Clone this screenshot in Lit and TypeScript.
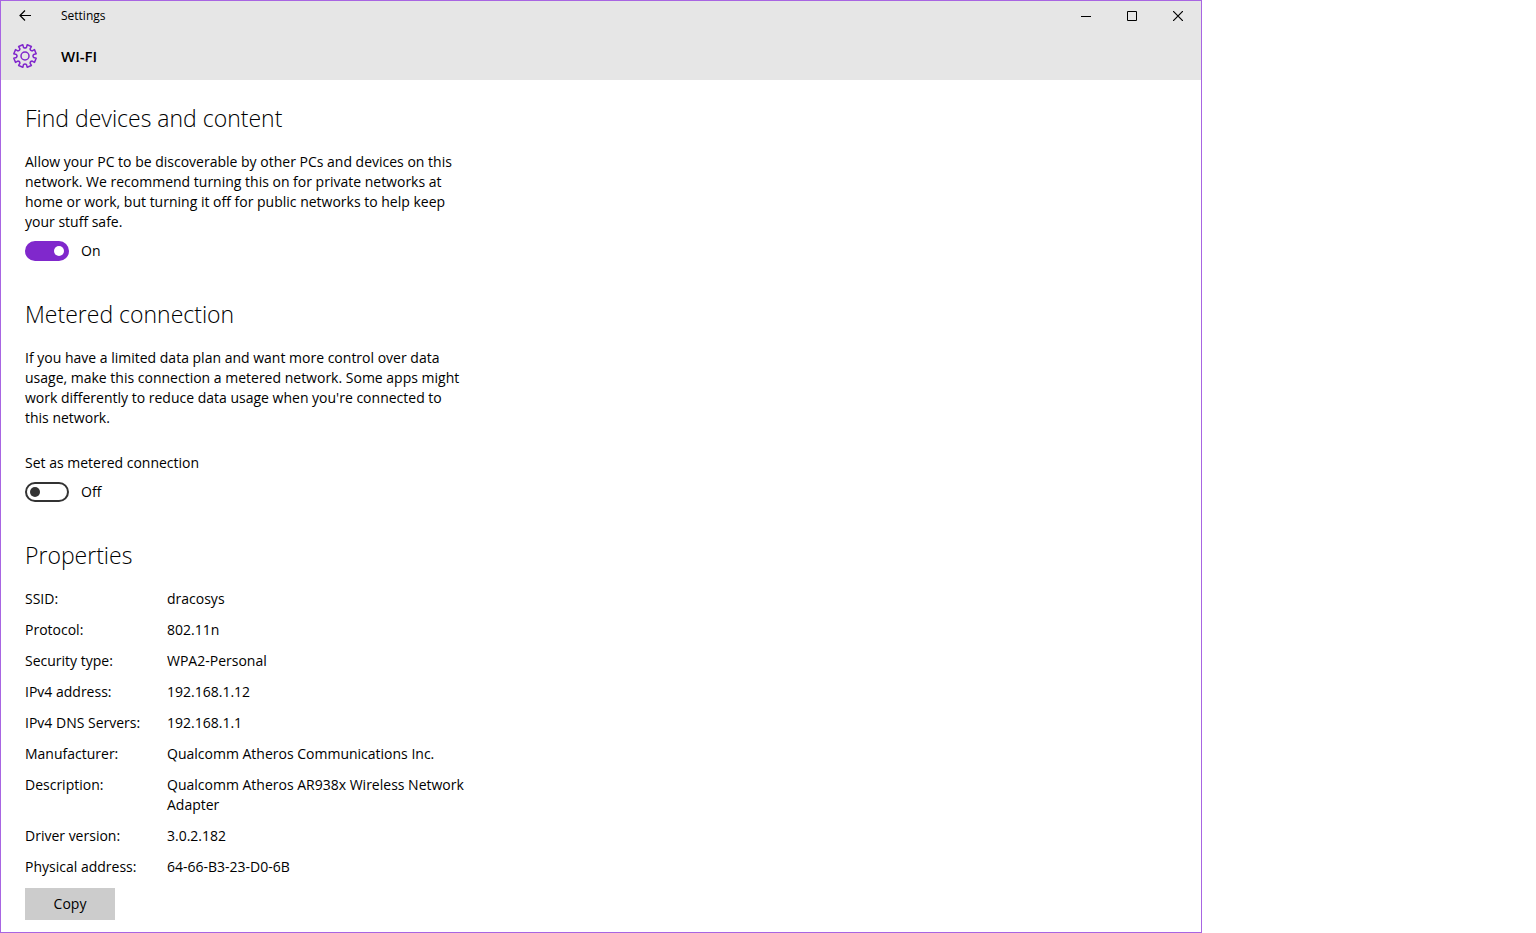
import { LitElement, html, css } from "lit";
import { customElement, property, state } from "lit/decorators.js";

/* Outline of a cog wheel: eight flat teeth joined by rounded valleys. */
function cogPath(c: number, outer: number, inner: number, teeth = 8): string {
  const step = (Math.PI * 2) / teeth;
  const at = (r: number, a: number) => `${(c + r * Math.sin(a)).toFixed(2)} ${(c - r * Math.cos(a)).toFixed(2)}`;
  let d = "";
  for (let i = 0; i < teeth; i++) {
    const a = (i + 0.5) * step;
    d += `${i ? "L" : "M"}${at(inner, a - 0.22)}L${at(outer, a - 0.2)}L${at(outer, a + 0.2)}L${at(inner, a + 0.22)}`;
    d += `Q${at(inner - 1.5, a + step / 2)} ${at(inner, a + step - 0.22)}`;
  }
  return d + "Z";
}

@customElement("toggle-switch")
export class ToggleSwitch extends LitElement {
  @property({ type: Boolean }) checked = false;
  @property() name = "";

  static styles = css`
    :host {
      display: block;
    }
    .switch {
      display: flex;
      align-items: center;
      gap: 12px;
      width: max-content;
      height: 20px;
    }
    .track {
      appearance: none;
      box-sizing: border-box;
      display: flex;
      align-items: center;
      width: 44px;
      height: 20px;
      margin: 0;
      padding: 0 3px;
      border: 2px solid #333;
      border-radius: 10px;
      background: #fff;
    }
    .track::before {
      content: "";
      width: 10px;
      height: 10px;
      border-radius: 50%;
      background: #333;
    }
    .track:checked {
      justify-content: flex-end;
      border-color: #8028cc;
      background: #8028cc;
    }
    .track:checked::before {
      background: #fff;
    }
  `;

  render() {
    return html`<label class="switch">
      <input
        class="track"
        type="checkbox"
        role="switch"
        aria-label=${this.name}
        .checked=${this.checked}
        @change=${(e: Event) => (this.checked = (e.target as HTMLInputElement).checked)}
      />
      <span>${this.checked ? "On" : "Off"}</span>
    </label>`;
  }
}

@customElement("app-root")
export class AppRoot extends LitElement {
  @state() private properties: [string, string][] = [
    ["SSID:", "dracosys"],
    ["Protocol:", "802.11n"],
    ["Security type:", "WPA2-Personal"],
    ["IPv4 address:", "192.168.1.12"],
    ["IPv4 DNS Servers:", "192.168.1.1"],
    ["Manufacturer:", "Qualcomm Atheros Communications Inc."],
    ["Description:", "Qualcomm Atheros AR938x Wireless Network Adapter"],
    ["Driver version:", "3.0.2.182"],
    ["Physical address:", "64-66-B3-23-D0-6B"],
  ];

  static styles = css`
    :host {
      display: block;
      min-height: 100vh;
      background: #fff;
      color: #000;
      font: 400 14px/20px "Segoe UI", "Open Sans", "Noto Sans", sans-serif;
    }
    .window {
      box-sizing: border-box;
      width: 100%;
      max-width: 1202px;
      min-height: 100vh;
      border: 1px solid #a865e2;
    }
    .top {
      background: #e6e6e6;
    }
    .titlebar {
      display: flex;
      align-items: center;
      height: 30px;
    }
    .caption {
      flex: 1;
      padding-left: 12px;
      font-size: 12px;
    }
    .bar-button {
      display: flex;
      align-items: center;
      justify-content: center;
      width: 46px;
      height: 30px;
      padding: 0;
      border: 0;
      background: none;
      color: inherit;
    }
    .back {
      width: 48px;
    }
    .page-title {
      display: flex;
      align-items: center;
      height: 49px;
      gap: 24px;
      padding-left: 12px;
    }
    .cog {
      color: #8028cc;
    }
    h1 {
      margin: 0;
      font-size: 15px;
      font-weight: 600;
    }
    svg {
      display: block;
    }
    main {
      padding: 22px 24px 12px;
    }
    section + section {
      margin-top: 37px;
    }
    h2 {
      margin: 0 0 18px;
      font-size: 23px;
      font-weight: 300;
      line-height: 32px;
    }
    .text {
      max-width: 436px;
      margin: 0 0 9px;
    }
    .spaced {
      margin-bottom: 25px;
    }
    .details {
      border-collapse: collapse;
      max-width: 454px;
    }
    .details th,
    .details td {
      padding: 0 0 11px;
      font-weight: inherit;
      text-align: left;
      vertical-align: top;
    }
    .details th {
      width: 142px;
      white-space: nowrap;
    }
    .copy {
      display: block;
      min-width: 90px;
      height: 32px;
      padding: 0 24px;
      border: 0;
      background: #ccc;
      color: inherit;
      font: inherit;
    }
  `;

  render() {
    return html`
      <div class="window">
        <header class="top">
          <div class="titlebar">
            <button class="bar-button back" aria-label="Back">
              <svg width="12" height="12" fill="none" stroke="currentColor" stroke-width="1.2">
                <path d="M12 5.5H1M6 .5l-5 5 5 5" />
              </svg>
            </button>
            <span class="caption">Settings</span>
            <button class="bar-button" aria-label="Minimize">
              <svg width="10" height="10"><path d="M0 5h10v1H0z" /></svg>
            </button>
            <button class="bar-button" aria-label="Maximize">
              <svg width="10" height="10" fill="none" stroke="currentColor"><path d="M.5.5h9v9h-9z" /></svg>
            </button>
            <button class="bar-button" aria-label="Close">
              <svg width="10" height="10" fill="none" stroke="currentColor" stroke-width="1.2">
                <path d="M0 0l10 10M10 0L0 10" />
              </svg>
            </button>
          </div>
          <div class="page-title">
            <svg class="cog" width="24" height="24" fill="none" stroke="currentColor" stroke-width="1.5">
              <path d=${cogPath(12, 11.4, 8.8)} stroke-linejoin="round" />
              <circle cx="12" cy="12" r="4" />
            </svg>
            <h1>WI-FI</h1>
          </div>
        </header>
        <main>
          <section>
            <h2>Find devices and content</h2>
            <p class="text">
              Allow your PC to be discoverable by other PCs and devices on this network. We recommend turning this on
              for private networks at home or work, but turning it off for public networks to help keep your stuff safe.
            </p>
            <toggle-switch name="Find devices and content" checked></toggle-switch>
          </section>
          <section>
            <h2>Metered connection</h2>
            <p class="text spaced">
              If you have a limited data plan and want more control over data usage, make this connection a metered
              network. Some apps might work differently to reduce data usage when you're connected to this network.
            </p>
            <p class="text">Set as metered connection</p>
            <toggle-switch name="Set as metered connection"></toggle-switch>
          </section>
          <section>
            <h2>Properties</h2>
            <table class="details">
              <tbody>
                ${this.properties.map(([name, value]) => html`<tr><th scope="row">${name}</th><td>${value}</td></tr>`)}
              </tbody>
            </table>
            <button class="copy">Copy</button>
          </section>
        </main>
      </div>
    `;
  }
}
